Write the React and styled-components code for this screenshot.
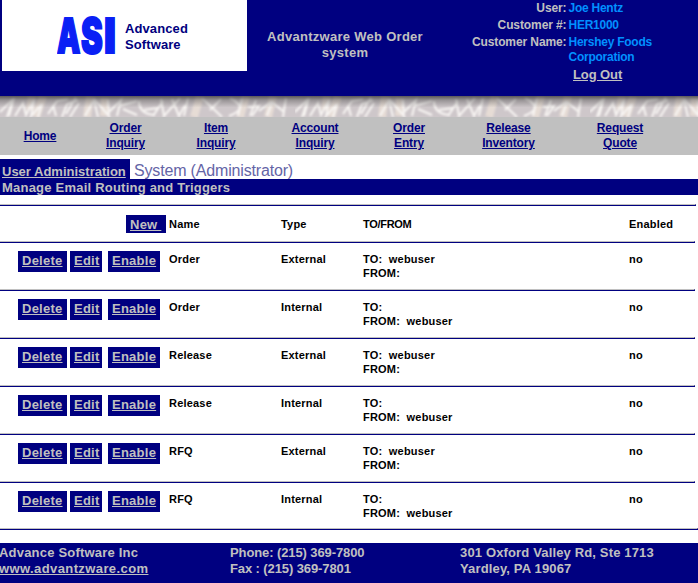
import React from "react";
import styled, { createGlobalStyle } from "styled-components";

const navy = "#000080";
const silver = "#c0c0c0";

const GlobalStyle = createGlobalStyle`
  * { box-sizing: border-box; }
  body {
    margin: 0;
    background: #fff;
    font-family: "Liberation Sans", Arial, sans-serif;
    overflow: hidden;
  }
`;

const Page = styled.div`
  width: 698px;
  height: 583px;
  display: flex;
  flex-direction: column;
  overflow: hidden;
`;

const Header = styled.header`
  height: 96px;
  flex: none;
  background: ${navy};
  display: grid;
  grid-template-columns: 247px 196px 255px;
  font-weight: bold;
  color: ${silver};
`;

const LogoPanel = styled.div`
  margin-left: 2px;
  height: 71px;
  background: #fff;
  display: flex;
  padding: 0 0 0 55px;
`;

const LogoMark = styled.div`
  width: 68px;
  height: 71px;
  display: flex;
  color: #0a20f5;
  font: 900 48px/72px Inter, sans-serif;
`;

const LogoLetter = styled.span`
  width: ${(p) => p.$width}px;
  transform: scaleX(${(p) => p.$scale});
  transform-origin: 0 50%;
  -webkit-text-stroke: 2px #0a20f5;
  stroke-linejoin: round;
`;

const LogoName = styled.div`
  padding-top: 21px;
  color: ${navy};
  font-size: 13px;
  line-height: 16px;
  letter-spacing: 0.1px;
`;

const Title = styled.h1`
  margin: 29px 0 0;
  font-size: 13px;
  line-height: 16px;
  letter-spacing: 0.28px;
  text-align: center;
`;

const Account = styled.div`
  display: flex;
  flex-direction: column;
  padding-top: 1px;
  font-size: 12px;
  letter-spacing: -0.1px;
`;

const AccountRow = styled.div`
  display: grid;
  grid-template-columns: 123.5px 110px;
  column-gap: 2px;
  line-height: 15px;
  margin-bottom: 2px;
`;

const Label = styled.span`
  text-align: right;
`;

const Value = styled.span`
  color: #0090ff;
  letter-spacing: -0.25px;
`;

const LogOut = styled.a`
  margin: 0 0 0 130px;
  font-size: 13px;
  line-height: 15px;
  text-decoration: underline;
`;

const Marble = styled.svg`
  display: block;
  flex: none;
  width: 698px;
  height: 21px;
`;

const Nav = styled.nav`
  height: 38px;
  flex: none;
  background: ${silver};
  display: grid;
  grid-template-columns: 80px 91px 90px 108px 80px 119px 104px;
  align-items: center;
`;

const NavLink = styled.a`
  color: ${navy};
  font-size: 12px;
  font-weight: bold;
  line-height: 15px;
  letter-spacing: -0.15px;
  text-align: center;
  text-decoration: underline;
  white-space: pre-line;
`;

const TabRow = styled.div`
  height: 20px;
  flex: none;
  margin-top: 4px;
  display: flex;
`;

const Tab = styled.a`
  width: 130px;
  padding-left: 2px;
  background: ${navy};
  color: ${silver};
  font-size: 13px;
  font-weight: bold;
  line-height: 25px;
  text-decoration: underline;
`;

const Group = styled.span`
  padding-left: 4px;
  color: #6464a6;
  font-size: 16px;
  line-height: 24px;
  letter-spacing: -0.17px;
`;

const Heading = styled.h2`
  margin: 0 0 9px;
  padding-left: 2px;
  height: 16px;
  flex: none;
  background: ${navy};
  color: ${silver};
  font-size: 13px;
  line-height: 17px;
  letter-spacing: 0.22px;
`;

const Rule = styled.div`
  width: ${(p) => p.$width}px;
  height: 2px;
  flex: none;
  border-top: 1px solid ${silver};
  border-right: 1px solid ${navy};
  background: ${navy};
`;

const Row = styled.div`
  height: ${(p) => (p.$head ? 35 : 46)}px;
  flex: none;
  display: grid;
  grid-template-columns: 169px 112px 82px 266px 69px;
  padding-top: ${(p) => (p.$head ? 9 : 8)}px;
  font-size: 11px;
  font-weight: bold;
  line-height: 14px;
  letter-spacing: 0.2px;

  &:last-of-type { height: 45px; }
`;

const Triggers = styled.section`
  display: flex;
  flex-direction: column;
`;

const Cell = styled.div`
  padding-top: ${(p) => (p.$head ? 2 : 1)}px;
  letter-spacing: ${(p) => (p.$tight ? -0.3 : 0.2)}px;
  white-space: pre;
`;

const Actions = styled.div`
  display: flex;
  padding-left: ${(p) => p.$indent}px;
`;

const Action = styled.a`
  width: ${(p) => p.$width}px;
  height: ${(p) => (p.$short ? 18 : 21)}px;
  margin-right: ${(p) => p.$gap || 0}px;
  padding-left: 4px;
  background: ${navy};
  color: ${silver};
  font-size: 13px;
  line-height: 19px;
  letter-spacing: 0.25px;
  text-decoration: underline;
  white-space: pre;
`;

const Footer = styled.footer`
  height: 40px;
  flex: none;
  margin-top: 13px;
  background: ${navy};
  color: ${silver};
  display: grid;
  grid-template-columns: 231px 230px 238px;
  margin-left: -1px;
  font-size: 13px;
  font-weight: bold;
  line-height: 16px;
  padding-top: 2px;
`;

const FooterText = styled.div`
  letter-spacing: ${(p) => p.$spacing}px;
`;

const FooterLink = styled.a`
  text-decoration: underline;
  letter-spacing: 0.4px;
`;

const links = ["Home", "Order\nInquiry", "Item\nInquiry", "Account\nInquiry", "Order\nEntry", "Release\nInventory", "Request\nQuote"];

const triggers = ["Order", "Release", "RFQ"].flatMap((name) => [
  { name, type: "External", route: "TO:  webuser\nFROM:" },
  { name, type: "Internal", route: "TO:\nFROM:  webuser" },
]);

function MarbleStrip() {
  return (
    <Marble viewBox="0 0 698 21">
      <defs>
        <linearGradient id="shade" x1="0" y1="0" x2="0" y2="1">
          <stop offset="0" stopColor="#222" stopOpacity=".68" />
          <stop offset=".2" stopColor="#333" stopOpacity=".35" />
          <stop offset=".55" stopColor="#444" stopOpacity="0" />
        </linearGradient>
        <filter id="soften" x="-5%" y="-20%" width="110%" height="140%"><feGaussianBlur stdDeviation=".8" /></filter>
        <pattern id="veins" width="295" height="21" patternUnits="userSpaceOnUse">
          <rect width="295" height="21" fill="#cec7ca" />
          <g fill="none" filter="url(#soften)">
            <path d="M43 0L36 21M90 0L87 21M200 0L194 21M246 0L240 21M273 0L268 21M105 2L104 20M32 0L30 14" stroke="#e6dcd5" strokeWidth="8" />
            <g stroke="#f8f5f3" strokeWidth="2.1">
              <path d="M0 16L13 3L7 21M14 2L9 20M15 20L23 7L26 19L34 4L31 20L42 8L38 21" />
              <path d="M48 18L57 5L68 3M53 9L56 20M62 21L67 8L78 4M70 21L79 7M76 1L66 18" />
              <path d="M85 20L94 4L98 21M94 3L109 20L108 4M109 16L121 4L117 20M119 10L137 5M123 13L137 19" />
              <path d="M139 5Q139 18 155 19M144 14L158 12M153 20L163 5M161 3L164 20L180 2M172 3L179 20L185 9M188 2L184 20" />
              <path d="M202 2L222 21M221 3L210 14M230 2Q250 12 229 20M242 2L238 20" />
              <path d="M250 20L256 4M248 11L259 10L252 20M259 15L272 5M267 20L272 6L284 16M286 2L283 21" />
            </g>
          </g>
        </pattern>
      </defs>
      <rect width="698" height="21" fill="url(#veins)" />
      <rect width="698" height="21" fill="url(#shade)" />
    </Marble>
  );
}

export default function App() {
  return (
    <Page>
      <GlobalStyle />
      <Header>
        <LogoPanel>
          <LogoMark>
            <LogoLetter $width={24} $scale={0.61}>A</LogoLetter>
            <LogoLetter $width={23} $scale={0.68}>S</LogoLetter>
            <LogoLetter $width={12} $scale={0.85}>I</LogoLetter>
          </LogoMark>
          <LogoName>Advanced<br />Software</LogoName>
        </LogoPanel>
        <Title>Advantzware Web Order<br />system</Title>
        <Account>
          <AccountRow><Label>User:</Label><Value>Joe Hentz</Value></AccountRow>
          <AccountRow><Label>Customer #:</Label><Value>HER1000</Value></AccountRow>
          <AccountRow><Label>Customer Name:</Label><Value>Hershey Foods<br />Corporation</Value></AccountRow>
          <LogOut>Log Out</LogOut>
        </Account>
      </Header>
      <MarbleStrip />
      <Nav>{links.map((text) => <NavLink key={text}>{text}</NavLink>)}</Nav>
      <TabRow>
        <Tab>User Administration</Tab>
        <Group>System (Administrator)</Group>
      </TabRow>
      <Heading>Manage Email Routing and Triggers</Heading>
      <Rule $width={696} />
      <Triggers>
        <Row $head>
          <Actions $indent={126}><Action $width={40} $short>{"New "}</Action></Actions>
          <Cell $head>Name</Cell>
          <Cell $head>Type</Cell>
          <Cell $head $tight>TO/FROM</Cell>
          <Cell $head>Enabled</Cell>
        </Row>
        {triggers.map((t) => (
          <React.Fragment key={t.name + t.type}>
            <Rule $width={695} />
            <Row>
              <Actions $indent={18}>
                <Action $width={49} $gap={3}>Delete</Action>
                <Action $width={32} $gap={6}>Edit</Action>
                <Action $width={52}>Enable</Action>
              </Actions>
              <Cell>{t.name}</Cell>
              <Cell>{t.type}</Cell>
              <Cell>{t.route}</Cell>
              <Cell>no</Cell>
            </Row>
          </React.Fragment>
        ))}
      </Triggers>
      <Rule $width={698} />
      <Footer>
        <FooterText $spacing={0.2}>Advance Software Inc<br /><FooterLink>www.advantzware.com</FooterLink></FooterText>
        <FooterText $spacing={-0.1}>Phone: (215) 369-7800<br />Fax : (215) 369-7801</FooterText>
        <FooterText $spacing={0.15}>301 Oxford Valley Rd, Ste 1713<br />Yardley, PA 19067</FooterText>
      </Footer>
    </Page>
  );
}
